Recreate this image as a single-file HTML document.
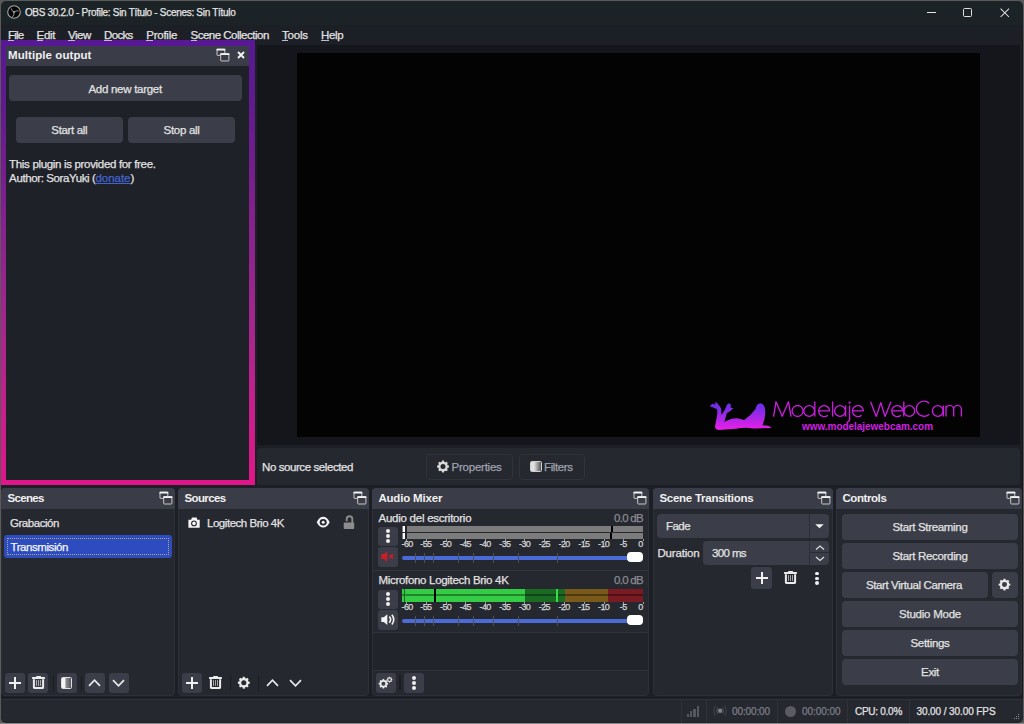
<!DOCTYPE html>
<html><head><meta charset="utf-8"><style>
html,body{margin:0;padding:0;width:1024px;height:724px;overflow:hidden;background:#2b2b2b;font-family:"Liberation Sans", sans-serif;}
body>div,#w div, #w svg{position:absolute;}
#w{position:absolute;left:0;top:0;width:1024px;height:724px;}
</style></head><body><div id="w">
<div style="left:0px;top:0px;width:1024px;height:724px;background:#5a5a5a;"></div>
<div style="left:0px;top:723px;width:1024px;height:1px;background:#8a8a8a;"></div>
<div style="left:1px;top:1px;width:1022px;height:722px;background:#1c2326;border-radius:5px 5px 5px 5px;"></div>
<div style="left:1px;top:25px;width:1022px;height:20px;background:#1d1f27;"></div>
<div style="left:1px;top:45px;width:1022px;height:655px;background:#1d1f26;"></div>
<div style="left:1022px;top:40px;width:1px;height:660px;background:#16171b;"></div>
<svg style="left:6.6px;top:5px" width="14" height="14" viewBox="-7 -7 14 14"><circle cx="0" cy="0" r="6.3" fill="#050505" stroke="#a8a8a8" stroke-width="1.1"/><path d="M0 0Q-2.2 -0.8 -2.8 -3.6M0 0Q2.2 -1.6 4.6 -1.1M0 0Q0.4 3 -1.7 5.2" stroke="#9a9a9a" stroke-width="1" fill="none"/><circle r="0.9" fill="#aaa"/></svg>
<div style="left:24.9px;top:8px;font-size:10px;line-height:10px;color:#e4e4e4;white-space:pre;-webkit-text-stroke:0.25px #e4e4e4;letter-spacing:-0.300px;">OBS 30.2.0 - Profile: Sin Título - Scenes: Sin Título</div>
<div style="left:926.5px;top:12px;width:9px;height:1.1px;background:#e4e4e4;"></div>
<div style="left:963px;top:8px;width:9px;height:9px;background:transparent;border:1.3px solid #e0e0e0;border-radius:1.5px;box-sizing:border-box;"></div>
<svg style="left:1000px;top:7.6px" width="10" height="10" viewBox="0 0 10 10"><path d="M0.6 0.6L9 9M9 0.6L0.6 9" stroke="#e4e4e4" stroke-width="1.05"/></svg>
<div style="left:257px;top:44.5px;width:763px;height:400.5px;background:#15161b;"></div>
<div style="left:297px;top:53px;width:683px;height:384px;background:#040304;"></div>
<div style="left:257px;top:448px;width:763px;height:37px;background:#262830;border-radius:4px;"></div>
<div style="left:262px;top:462px;font-size:11.5px;line-height:11.5px;color:#e2e2e2;white-space:pre;-webkit-text-stroke:0.25px #e2e2e2;letter-spacing:-0.414px;">No source selected</div>
<div style="left:426px;top:454px;width:87px;height:26px;background:transparent;border:1px solid #30333c;border-radius:4px;box-sizing:border-box;"></div>
<div style="left:518.5px;top:454px;width:66px;height:26px;background:transparent;border:1px solid #30333c;border-radius:4px;box-sizing:border-box;"></div>
<div style="left:451.6px;top:462px;font-size:11.5px;line-height:11.5px;color:#9ea2ae;white-space:pre;-webkit-text-stroke:0.25px #9ea2ae;letter-spacing:-0.242px;">Properties</div>
<svg style="left:0;top:0" width="1024" height="724"><path fill-rule="evenodd" fill="#d8d8d8" d="M447.65,465.31 L448.93,465.56 L448.93,467.44 L447.65,467.69 L447.43,468.34 L447.13,468.94 L447.85,470.03 L446.53,471.35 L445.44,470.63 L444.84,470.93 L444.19,471.15 L443.94,472.43 L442.06,472.43 L441.81,471.15 L441.16,470.93 L440.56,470.63 L439.47,471.35 L438.15,470.03 L438.87,468.94 L438.57,468.34 L438.35,467.69 L437.07,467.44 L437.07,465.56 L438.35,465.31 L438.57,464.66 L438.87,464.06 L438.15,462.97 L439.47,461.65 L440.56,462.37 L441.16,462.07 L441.81,461.85 L442.06,460.57 L443.94,460.57 L444.19,461.85 L444.84,462.07 L445.44,462.37 L446.53,461.65 L447.85,462.97 L447.13,464.06 L447.43,464.66 Z M445.52,466.5 A2.52,2.52 0 1 0 440.48,466.5 A2.52,2.52 0 1 0 445.52,466.5 Z"/></svg>
<div style="left:544px;top:462px;font-size:11.5px;line-height:11.5px;color:#9ea2ae;white-space:pre;-webkit-text-stroke:0.25px #9ea2ae;letter-spacing:-0.387px;">Filters</div>
<div style="left:530px;top:461px;width:11.5px;height:11px;border:1.2px solid #d0d0d0;box-sizing:border-box;background:linear-gradient(90deg,#e0e0e0 0 30%,#555 100%);border-radius:1.5px"></div>
<div style="left:1px;top:40.3px;width:253.5px;height:444.7px;background:linear-gradient(180deg,#581894 0%,#621a8e 15%,#a0268e 60%,#c81f8c 83%,#e0168a 100%);"></div>
<div style="left:254.6px;top:41px;width:2.4px;height:445px;background:#1c1f24;"></div>
<div style="left:5.7px;top:46px;width:243.3px;height:433.5px;background:#1f2129;"></div>
<div style="left:8px;top:30px;font-size:11.5px;line-height:11.5px;color:#e2e2e2;white-space:pre;-webkit-text-stroke:0.25px #e2e2e2;letter-spacing:-0.783px;">File</div>
<div style="left:8px;top:39.6px;width:6px;height:1.1px;background:#c0b8d0;"></div>
<div style="left:36.6px;top:30px;font-size:11.5px;line-height:11.5px;color:#e2e2e2;white-space:pre;-webkit-text-stroke:0.25px #e2e2e2;letter-spacing:-0.357px;">Edit</div>
<div style="left:36.6px;top:39.6px;width:6px;height:1.1px;background:#c0b8d0;"></div>
<div style="left:68px;top:30px;font-size:11.5px;line-height:11.5px;color:#e2e2e2;white-space:pre;-webkit-text-stroke:0.25px #e2e2e2;letter-spacing:-0.455px;">View</div>
<div style="left:68px;top:39.6px;width:7px;height:1.1px;background:#c0b8d0;"></div>
<div style="left:104px;top:30px;font-size:11.5px;line-height:11.5px;color:#e2e2e2;white-space:pre;-webkit-text-stroke:0.25px #e2e2e2;letter-spacing:-0.651px;">Docks</div>
<div style="left:104px;top:39.6px;width:8px;height:1.1px;background:#c0b8d0;"></div>
<div style="left:146.2px;top:30px;font-size:11.5px;line-height:11.5px;color:#e2e2e2;white-space:pre;-webkit-text-stroke:0.25px #e2e2e2;letter-spacing:-0.230px;">Profile</div>
<div style="left:146.2px;top:39.6px;width:7px;height:1.1px;background:#c0b8d0;"></div>
<div style="left:190.5px;top:30px;font-size:11.5px;line-height:11.5px;color:#e2e2e2;white-space:pre;-webkit-text-stroke:0.25px #e2e2e2;letter-spacing:-0.501px;">Scene Collection</div>
<div style="left:190.5px;top:39.6px;width:6px;height:1.1px;background:#c0b8d0;"></div>
<div style="left:282px;top:30px;font-size:11.5px;line-height:11.5px;color:#e2e2e2;white-space:pre;-webkit-text-stroke:0.25px #e2e2e2;letter-spacing:-0.212px;">Tools</div>
<div style="left:282px;top:39.6px;width:6px;height:1.1px;background:#c0b8d0;"></div>
<div style="left:321px;top:30px;font-size:11.5px;line-height:11.5px;color:#e2e2e2;white-space:pre;-webkit-text-stroke:0.25px #e2e2e2;letter-spacing:-0.314px;">Help</div>
<div style="left:321px;top:39.6px;width:8px;height:1.1px;background:#c0b8d0;"></div>
<div style="left:6px;top:46px;width:243px;height:20px;background:#3a3d47;"></div>
<div style="left:8px;top:50px;font-size:11.5px;line-height:11.5px;color:#f0f0f0;white-space:pre;font-weight:bold;letter-spacing:0.073px;">Multiple output</div>
<div style="left:9px;top:75px;width:233px;height:26px;background:#3b3e48;border-radius:4px;"></div>
<div style="left:88.4px;top:84px;font-size:11.5px;line-height:11.5px;color:#e2e2e2;white-space:pre;-webkit-text-stroke:0.25px #e2e2e2;letter-spacing:-0.276px;">Add new target</div>
<div style="left:16px;top:117px;width:107px;height:26px;background:#3b3e48;border-radius:4px;"></div>
<div style="left:128px;top:117px;width:107px;height:26px;background:#3b3e48;border-radius:4px;"></div>
<div style="left:51.3px;top:125px;font-size:11.5px;line-height:11.5px;color:#e2e2e2;white-space:pre;-webkit-text-stroke:0.25px #e2e2e2;letter-spacing:-0.333px;">Start all</div>
<div style="left:163.6px;top:125px;font-size:11.5px;line-height:11.5px;color:#e2e2e2;white-space:pre;-webkit-text-stroke:0.25px #e2e2e2;letter-spacing:-0.295px;">Stop all</div>
<div style="left:9.1px;top:159px;font-size:11.5px;line-height:11.5px;color:#e2e2e2;white-space:pre;-webkit-text-stroke:0.25px #e2e2e2;letter-spacing:-0.326px;">This plugin is provided for free.</div>
<div style="left:9.1px;top:173px;font-size:11.5px;line-height:11.5px;color:#e2e2e2;white-space:pre;-webkit-text-stroke:0.25px #e2e2e2;letter-spacing:-0.385px;">Author: SoraYuki (</div>
<div style="left:95.5px;top:173px;font-size:11.5px;line-height:11.5px;color:#4264d0;white-space:pre;-webkit-text-stroke:0.25px #4264d0;letter-spacing:-0.031px;text-decoration:underline;">donate</div>
<div style="left:130.4px;top:173px;font-size:11.5px;line-height:11.5px;color:#e2e2e2;white-space:pre;-webkit-text-stroke:0.25px #e2e2e2;">)</div>
<svg style="left:216px;top:48px" width="14" height="14" viewBox="0 0 14 14"><rect x="1" y="1.2" width="7.8" height="6.2" rx="0.4" fill="none" stroke="#c8c8c8" stroke-width="1"/><rect x="0.5" y="0.7" width="8.8" height="1.9" rx="0.3" fill="#f4f4f4"/><rect x="4.7" y="5.7" width="8.2" height="7.3" rx="0.6" fill="#3a3d47" stroke="#c8c8c8" stroke-width="1"/><rect x="4.2" y="5.2" width="9.2" height="1.9" rx="0.3" fill="#f4f4f4"/></svg>
<svg style="left:236.5px;top:51.3px" width="8" height="8" viewBox="0 0 8 8"><path d="M1 1L7 7M7 1L1 7" stroke="#f4f4f4" stroke-width="1.9"/></svg>
<svg style="left:0;top:0" width="1024" height="724" viewBox="0 0 1024 724">
<defs><linearGradient id="sg" x1="0" y1="0" x2="0" y2="1"><stop offset="0" stop-color="#5e30e8"/><stop offset="0.5" stop-color="#a028e8"/><stop offset="1" stop-color="#ec1ee8"/></linearGradient></defs>
<g transform="translate(705,398) scale(0.06835)">
<path fill="url(#sg)" d="M70 120 L105 85 L150 95 L150 60 L175 70 L215 120 L235 150 L242 250 L295 165 L320 100 L345 75 L380 95 L375 140 L415 150 L365 195 L320 220 L283 350 Q380 290 470 295 Q540 310 575 322 Q680 240 740 160 Q750 80 810 75 Q870 85 880 170 Q890 290 840 400 L930 405 L975 440 L700 448 Q600 425 450 450 L200 468 Q140 462 148 410 L180 235 L178 165 L130 142 Z"/>
</g>
<g stroke="#c81edc" stroke-width="1.35" fill="none" stroke-linejoin="round">
<path d="M773.6,416.6 L776,401.8 L782.2,416.2 L788.5,401.8 L791,416.6"/>
<circle cx="797.6" cy="411" r="5.5"/>
<circle cx="809.2" cy="411" r="5.4"/><path d="M814.8,401.4V416.6"/>
<path d="M818.8,410.8H829.6A5.5,5.5 0 1 0 827.8,415.2"/>
<path d="M832.6,401.4V416.6"/>
<circle cx="840" cy="411" r="5.4"/><path d="M845.6,405.5V416.6"/>
<path d="M849.6,405.5V419.5Q849.6,421.6 847.3,421.6"/><circle cx="849.6" cy="402.6" r="0.5"/>
<path d="M852.6,410.8H863.4A5.5,5.5 0 1 0 861.6,415.2"/>
<path d="M870.6,401.8 L876.3,416.4 L880.8,402.6 L885,416.4 L891,401.8"/>
<path d="M891.9,410.8H902.7A5.5,5.5 0 1 0 900.9,415.2"/>
<path d="M903.8,401.4V416.6"/><circle cx="909.3" cy="411" r="5.4"/>
<path d="M929.2,403.2A7.6,7.6 0 1 0 929.2,414.2"/>
<circle cx="937.8" cy="411" r="5.4"/><path d="M943.3,405.5V416.6"/>
<path d="M946,405.5V416.6M946,409.8A3.8,4.3 0 0 1 953.7,409.8V416.6M953.7,409.8A3.8,4.3 0 0 1 961.4,409.8V416.6"/>
</g>
<text x="802" y="429.7" font-family="Liberation Sans" font-size="10.2" font-weight="bold" fill="#d020e0" textLength="131" lengthAdjust="spacingAndGlyphs">www.modelajewebcam.com</text>
</svg>
<div style="left:1px;top:488px;width:174px;height:208px;background:#262830;border-radius:4px;border:1px solid #2e3039;box-sizing:border-box;"></div>
<div style="left:1px;top:488px;width:174px;height:21px;background:#3a3d47;border-radius:4px 4px 0 0;"></div>
<div style="left:7.4px;top:493px;font-size:11.5px;line-height:11.5px;color:#f0f0f0;white-space:pre;font-weight:bold;letter-spacing:-0.647px;">Scenes</div>
<svg style="left:159px;top:491px" width="14" height="14" viewBox="0 0 14 14"><rect x="1" y="1.2" width="7.8" height="6.2" rx="0.4" fill="none" stroke="#c8c8c8" stroke-width="1"/><rect x="0.5" y="0.7" width="8.8" height="1.9" rx="0.3" fill="#f4f4f4"/><rect x="4.7" y="5.7" width="8.2" height="7.3" rx="0.6" fill="#3a3d47" stroke="#c8c8c8" stroke-width="1"/><rect x="4.2" y="5.2" width="9.2" height="1.9" rx="0.3" fill="#f4f4f4"/></svg>
<div style="left:178px;top:488px;width:191px;height:208px;background:#262830;border-radius:4px;border:1px solid #2e3039;box-sizing:border-box;"></div>
<div style="left:178px;top:488px;width:191px;height:21px;background:#3a3d47;border-radius:4px 4px 0 0;"></div>
<div style="left:184.4px;top:493px;font-size:11.5px;line-height:11.5px;color:#f0f0f0;white-space:pre;font-weight:bold;letter-spacing:-0.599px;">Sources</div>
<svg style="left:353px;top:491px" width="14" height="14" viewBox="0 0 14 14"><rect x="1" y="1.2" width="7.8" height="6.2" rx="0.4" fill="none" stroke="#c8c8c8" stroke-width="1"/><rect x="0.5" y="0.7" width="8.8" height="1.9" rx="0.3" fill="#f4f4f4"/><rect x="4.7" y="5.7" width="8.2" height="7.3" rx="0.6" fill="#3a3d47" stroke="#c8c8c8" stroke-width="1"/><rect x="4.2" y="5.2" width="9.2" height="1.9" rx="0.3" fill="#f4f4f4"/></svg>
<div style="left:372px;top:488px;width:277px;height:208px;background:#262830;border-radius:4px;border:1px solid #2e3039;box-sizing:border-box;"></div>
<div style="left:372px;top:488px;width:277px;height:21px;background:#3a3d47;border-radius:4px 4px 0 0;"></div>
<div style="left:378.4px;top:493px;font-size:11.5px;line-height:11.5px;color:#f0f0f0;white-space:pre;font-weight:bold;letter-spacing:-0.183px;">Audio Mixer</div>
<svg style="left:633px;top:491px" width="14" height="14" viewBox="0 0 14 14"><rect x="1" y="1.2" width="7.8" height="6.2" rx="0.4" fill="none" stroke="#c8c8c8" stroke-width="1"/><rect x="0.5" y="0.7" width="8.8" height="1.9" rx="0.3" fill="#f4f4f4"/><rect x="4.7" y="5.7" width="8.2" height="7.3" rx="0.6" fill="#3a3d47" stroke="#c8c8c8" stroke-width="1"/><rect x="4.2" y="5.2" width="9.2" height="1.9" rx="0.3" fill="#f4f4f4"/></svg>
<div style="left:653px;top:488px;width:180px;height:208px;background:#262830;border-radius:4px;border:1px solid #2e3039;box-sizing:border-box;"></div>
<div style="left:653px;top:488px;width:180px;height:21px;background:#3a3d47;border-radius:4px 4px 0 0;"></div>
<div style="left:659.4px;top:493px;font-size:11.5px;line-height:11.5px;color:#f0f0f0;white-space:pre;font-weight:bold;letter-spacing:-0.261px;">Scene Transitions</div>
<svg style="left:817px;top:491px" width="14" height="14" viewBox="0 0 14 14"><rect x="1" y="1.2" width="7.8" height="6.2" rx="0.4" fill="none" stroke="#c8c8c8" stroke-width="1"/><rect x="0.5" y="0.7" width="8.8" height="1.9" rx="0.3" fill="#f4f4f4"/><rect x="4.7" y="5.7" width="8.2" height="7.3" rx="0.6" fill="#3a3d47" stroke="#c8c8c8" stroke-width="1"/><rect x="4.2" y="5.2" width="9.2" height="1.9" rx="0.3" fill="#f4f4f4"/></svg>
<div style="left:836px;top:488px;width:186px;height:208px;background:#262830;border-radius:4px;border:1px solid #2e3039;box-sizing:border-box;"></div>
<div style="left:836px;top:488px;width:186px;height:21px;background:#3a3d47;border-radius:4px 4px 0 0;"></div>
<div style="left:842.4px;top:493px;font-size:11.5px;line-height:11.5px;color:#f0f0f0;white-space:pre;font-weight:bold;letter-spacing:-0.410px;">Controls</div>
<svg style="left:1006px;top:491px" width="14" height="14" viewBox="0 0 14 14"><rect x="1" y="1.2" width="7.8" height="6.2" rx="0.4" fill="none" stroke="#c8c8c8" stroke-width="1"/><rect x="0.5" y="0.7" width="8.8" height="1.9" rx="0.3" fill="#f4f4f4"/><rect x="4.7" y="5.7" width="8.2" height="7.3" rx="0.6" fill="#3a3d47" stroke="#c8c8c8" stroke-width="1"/><rect x="4.2" y="5.2" width="9.2" height="1.9" rx="0.3" fill="#f4f4f4"/></svg>
<div style="left:10px;top:518px;font-size:11.5px;line-height:11.5px;color:#e2e2e2;white-space:pre;-webkit-text-stroke:0.25px #e2e2e2;letter-spacing:-0.451px;">Grabación</div>
<div style="left:4px;top:535px;width:168px;height:23px;background:#2c4cc0;border-radius:3px;"></div>
<div style="left:7px;top:538px;width:162px;height:17px;background:transparent;border:1px dotted #b8a878;box-sizing:border-box;"></div>
<div style="left:10.5px;top:542px;font-size:11.5px;line-height:11.5px;color:#f4f4f4;white-space:pre;-webkit-text-stroke:0.25px #f4f4f4;letter-spacing:-0.428px;">Transmisión</div>
<div style="left:5px;top:673px;width:20px;height:20px;background:#3b3e48;border-radius:3px;"></div>
<div style="left:28px;top:673px;width:20px;height:20px;background:#3b3e48;border-radius:3px;"></div>
<div style="left:57px;top:673px;width:20px;height:20px;background:#3b3e48;border-radius:3px;"></div>
<div style="left:85px;top:673px;width:20px;height:20px;background:#3b3e48;border-radius:3px;"></div>
<div style="left:109px;top:673px;width:20px;height:20px;background:#3b3e48;border-radius:3px;"></div>
<div style="left:9px;top:681.5px;width:12px;height:2px;background:#f0f0f0;"></div>
<div style="left:14px;top:676.5px;width:2px;height:12px;background:#f0f0f0;"></div>
<svg style="left:31.9px;top:675.9px" width="13" height="14" viewBox="0 0 13 14"><rect x="4.1" y="0" width="5" height="1.6" rx="0.7" fill="#ececec"/><rect x="0" y="1.1" width="13" height="1.8" rx="0.6" fill="#ececec"/><path d="M1.9 3.3V11.4Q1.9 12.1 2.9 12.1H10.1Q11.1 12.1 11.1 11.4V3.3" stroke="#ececec" stroke-width="2" fill="none"/><path d="M4.5 4.1V9.9M6.5 4.1V9.9M8.5 4.1V9.9" stroke="#b4b4b8" stroke-width="0.9"/></svg>
<div style="left:52.5px;top:675.5px;width:1px;height:15px;background:#1b1c22;"></div>
<div style="left:80.5px;top:675.5px;width:1px;height:15px;background:#1b1c22;"></div>
<div style="left:60.8px;top:677px;width:11.2px;height:11.8px;border:1.2px solid #e0e0e0;box-sizing:border-box;background:linear-gradient(90deg,#f4f4f4 0 30%,#8a8a90 45%,#55575e 100%);border-radius:1.5px"></div>
<svg style="left:88.3px;top:678.5px" width="13" height="8" viewBox="0 0 13 8"><path d="M1 6.8L6.5 1.2L12 6.8" stroke="#e8e8e8" stroke-width="1.7" fill="none"/></svg>
<svg style="left:111.9px;top:678.5px" width="13" height="8" viewBox="0 0 13 8"><path d="M1 1.2L6.5 6.8L12 1.2" stroke="#e8e8e8" stroke-width="1.7" fill="none"/></svg>
<svg style="left:187.5px;top:516.5px" width="12" height="11" viewBox="0 0 12 11"><path d="M0.4 2.7H3.2L3.9 0.5H8.6L9.3 2.7H11.7V10.7H0.4Z" fill="#f4f4f4"/><circle cx="6" cy="6.4" r="2.9" fill="#262830"/><circle cx="6" cy="6.4" r="1.8" fill="#f4f4f4"/></svg>
<div style="left:207px;top:518px;font-size:11.5px;line-height:11.5px;color:#e2e2e2;white-space:pre;-webkit-text-stroke:0.25px #e2e2e2;letter-spacing:-0.462px;">Logitech Brio 4K</div>
<svg style="left:0;top:0" width="1024" height="724"><path d="M316.7,522.2 Q319.5,516.8 323.2,516.8 Q326.9,516.8 329.7,522.2 Q326.9,527.6 323.2,527.6 Q319.5,527.6 316.7,522.2Z" fill="#f4f4f4"/><ellipse cx="323.2" cy="522.2" rx="3.5" ry="3.3" fill="#262830"/><circle cx="323.2" cy="522.2" r="1.5" fill="#f4f4f4"/><rect x="343.7" y="522.6" width="10.5" height="6.3" rx="0.9" fill="#8c8c8c"/><path d="M346.7,521.2V519A2.8,2.8 0 0 1 352.3,519V523" stroke="#8c8c8c" stroke-width="1.9" fill="none"/></svg>
<div style="left:182px;top:673px;width:20px;height:20px;background:#3b3e48;border-radius:3px;"></div>
<div style="left:185.9px;top:681.6px;width:12px;height:2px;background:#f0f0f0;"></div>
<div style="left:190.9px;top:676.6px;width:2px;height:12px;background:#f0f0f0;"></div>
<svg style="left:209.4px;top:675.9px" width="13" height="14" viewBox="0 0 13 14"><rect x="4.1" y="0" width="5" height="1.6" rx="0.7" fill="#ececec"/><rect x="0" y="1.1" width="13" height="1.8" rx="0.6" fill="#ececec"/><path d="M1.9 3.3V11.4Q1.9 12.1 2.9 12.1H10.1Q11.1 12.1 11.1 11.4V3.3" stroke="#ececec" stroke-width="2" fill="none"/><path d="M4.5 4.1V9.9M6.5 4.1V9.9M8.5 4.1V9.9" stroke="#b4b4b8" stroke-width="0.9"/></svg>
<div style="left:229.5px;top:675.5px;width:1px;height:15px;background:#1b1c22;"></div>
<div style="left:258px;top:675.5px;width:1px;height:15px;background:#1b1c22;"></div>
<svg style="left:0;top:0" width="1024" height="724"><path fill-rule="evenodd" fill="#e8e8e8" d="M248.45,681.51 L249.73,681.76 L249.73,683.64 L248.45,683.89 L248.23,684.54 L247.93,685.14 L248.65,686.23 L247.33,687.55 L246.24,686.83 L245.64,687.13 L244.99,687.35 L244.74,688.63 L242.86,688.63 L242.61,687.35 L241.96,687.13 L241.36,686.83 L240.27,687.55 L238.95,686.23 L239.67,685.14 L239.37,684.54 L239.15,683.89 L237.87,683.64 L237.87,681.76 L239.15,681.51 L239.37,680.86 L239.67,680.26 L238.95,679.17 L240.27,677.85 L241.36,678.57 L241.96,678.27 L242.61,678.05 L242.86,676.77 L244.74,676.77 L244.99,678.05 L245.64,678.27 L246.24,678.57 L247.33,677.85 L248.65,679.17 L247.93,680.26 L248.23,680.86 Z M246.32,682.7 A2.52,2.52 0 1 0 241.28,682.7 A2.52,2.52 0 1 0 246.32,682.7 Z"/></svg>
<svg style="left:265.5px;top:678.5px" width="13" height="8" viewBox="0 0 13 8"><path d="M1 6.8L6.5 1.2L12 6.8" stroke="#e8e8e8" stroke-width="1.7" fill="none"/></svg>
<svg style="left:289.2px;top:678.5px" width="13" height="8" viewBox="0 0 13 8"><path d="M1 1.2L6.5 6.8L12 1.2" stroke="#e8e8e8" stroke-width="1.7" fill="none"/></svg>
<div style="left:373px;top:509px;width:275px;height:124px;background:#262830;"></div>
<div style="left:373px;top:570px;width:275px;height:1px;background:#30323b;"></div>
<div style="left:373px;top:632px;width:275px;height:1px;background:#30323b;"></div>
<div style="left:373px;top:633px;width:275px;height:37px;background:#22242b;"></div>
<div style="left:373px;top:670px;width:275px;height:1px;background:#30323b;"></div>
<div style="left:378.5px;top:513px;font-size:11.5px;line-height:11.5px;color:#e2e2e2;white-space:pre;-webkit-text-stroke:0.25px #e2e2e2;letter-spacing:-0.251px;">Audio del escritorio</div>
<div style="left:614px;top:513px;font-size:11.5px;line-height:11.5px;color:#8a8c92;white-space:pre;-webkit-text-stroke:0.25px #8a8c92;letter-spacing:-0.708px;">0.0 dB</div>
<div style="left:378px;top:527px;width:20px;height:19px;background:#3b3e48;border-radius:3px;"></div>
<div style="left:386.2px;top:529.2px;width:3.6px;height:3.6px;border-radius:2px;background:#f0f0f0"></div>
<div style="left:386.2px;top:534.2px;width:3.6px;height:3.6px;border-radius:2px;background:#f0f0f0"></div>
<div style="left:386.2px;top:539.2px;width:3.6px;height:3.6px;border-radius:2px;background:#f0f0f0"></div>
<div style="left:378px;top:547.3px;width:20px;height:19.5px;background:#3b3e48;border-radius:3px;"></div>
<div style="left:402px;top:526px;width:241px;height:6px;background:#7c7c7c;"></div>
<div style="left:402px;top:533px;width:241px;height:6px;background:#7c7c7c;"></div>
<div style="left:402.6px;top:526px;width:2.5px;height:6px;background:#ffffff;"></div>
<div style="left:402.6px;top:533px;width:2.5px;height:6px;background:#ffffff;"></div>
<div style="left:405px;top:526px;width:1.5px;height:13px;background:#22242b;"></div>
<div style="left:611px;top:526px;width:2px;height:6px;background:#000;"></div>
<div style="left:610px;top:533px;width:2px;height:6px;background:#000;"></div>
<div style="left:406px;top:538.6px;width:1px;height:2.6px;background:#a0a0a0;"></div>
<div style="left:401.5px;top:540px;font-size:9px;line-height:9px;color:#d8d8d8;white-space:pre;-webkit-text-stroke:0.25px #d8d8d8;letter-spacing:-0.672px;letter-spacing:-0.6px;">-60</div>
<div style="left:426px;top:538.6px;width:1px;height:2.6px;background:#a0a0a0;"></div>
<div style="left:420.25px;top:540px;font-size:9px;line-height:9px;color:#d8d8d8;white-space:pre;-webkit-text-stroke:0.25px #d8d8d8;letter-spacing:-0.672px;letter-spacing:-0.6px;">-55</div>
<div style="left:446px;top:538.6px;width:1px;height:2.6px;background:#a0a0a0;"></div>
<div style="left:440.0px;top:540px;font-size:9px;line-height:9px;color:#d8d8d8;white-space:pre;-webkit-text-stroke:0.25px #d8d8d8;letter-spacing:-0.672px;letter-spacing:-0.6px;">-50</div>
<div style="left:465px;top:538.6px;width:1px;height:2.6px;background:#a0a0a0;"></div>
<div style="left:459.75px;top:540px;font-size:9px;line-height:9px;color:#d8d8d8;white-space:pre;-webkit-text-stroke:0.25px #d8d8d8;letter-spacing:-0.672px;letter-spacing:-0.6px;">-45</div>
<div style="left:485px;top:538.6px;width:1px;height:2.6px;background:#a0a0a0;"></div>
<div style="left:479.5px;top:540px;font-size:9px;line-height:9px;color:#d8d8d8;white-space:pre;-webkit-text-stroke:0.25px #d8d8d8;letter-spacing:-0.672px;letter-spacing:-0.6px;">-40</div>
<div style="left:505px;top:538.6px;width:1px;height:2.6px;background:#a0a0a0;"></div>
<div style="left:499.25px;top:540px;font-size:9px;line-height:9px;color:#d8d8d8;white-space:pre;-webkit-text-stroke:0.25px #d8d8d8;letter-spacing:-0.672px;letter-spacing:-0.6px;">-35</div>
<div style="left:524px;top:538.6px;width:1px;height:2.6px;background:#a0a0a0;"></div>
<div style="left:519.0px;top:540px;font-size:9px;line-height:9px;color:#d8d8d8;white-space:pre;-webkit-text-stroke:0.25px #d8d8d8;letter-spacing:-0.672px;letter-spacing:-0.6px;">-30</div>
<div style="left:544px;top:538.6px;width:1px;height:2.6px;background:#a0a0a0;"></div>
<div style="left:538.75px;top:540px;font-size:9px;line-height:9px;color:#d8d8d8;white-space:pre;-webkit-text-stroke:0.25px #d8d8d8;letter-spacing:-0.672px;letter-spacing:-0.6px;">-25</div>
<div style="left:564px;top:538.6px;width:1px;height:2.6px;background:#a0a0a0;"></div>
<div style="left:558.5px;top:540px;font-size:9px;line-height:9px;color:#d8d8d8;white-space:pre;-webkit-text-stroke:0.25px #d8d8d8;letter-spacing:-0.672px;letter-spacing:-0.6px;">-20</div>
<div style="left:584px;top:538.6px;width:1px;height:2.6px;background:#a0a0a0;"></div>
<div style="left:578.25px;top:540px;font-size:9px;line-height:9px;color:#d8d8d8;white-space:pre;-webkit-text-stroke:0.25px #d8d8d8;letter-spacing:-0.672px;letter-spacing:-0.6px;">-15</div>
<div style="left:604px;top:538.6px;width:1px;height:2.6px;background:#a0a0a0;"></div>
<div style="left:598.0px;top:540px;font-size:9px;line-height:9px;color:#d8d8d8;white-space:pre;-webkit-text-stroke:0.25px #d8d8d8;letter-spacing:-0.672px;letter-spacing:-0.6px;">-10</div>
<div style="left:623px;top:538.6px;width:1px;height:2.6px;background:#a0a0a0;"></div>
<div style="left:619.75px;top:540px;font-size:9px;line-height:9px;color:#d8d8d8;white-space:pre;-webkit-text-stroke:0.25px #d8d8d8;letter-spacing:-0.508px;letter-spacing:-0.6px;">-5</div>
<div style="left:643px;top:538.6px;width:1px;height:2.6px;background:#a0a0a0;"></div>
<div style="left:638.3px;top:540px;font-size:9px;line-height:9px;color:#d8d8d8;white-space:pre;-webkit-text-stroke:0.25px #d8d8d8;letter-spacing:-0.6px;">0</div>
<div style="left:402px;top:556px;width:241px;height:4px;background:#4a6ad8;border-radius:2px;"></div>
<div style="left:415px;top:553px;width:1px;height:10px;background:#4c505c;"></div>
<div style="left:424px;top:553px;width:1px;height:10px;background:#4c505c;"></div>
<div style="left:433px;top:553px;width:1px;height:10px;background:#4c505c;"></div>
<div style="left:458px;top:553px;width:1px;height:10px;background:#4c505c;"></div>
<div style="left:473px;top:553px;width:1px;height:10px;background:#4c505c;"></div>
<div style="left:493px;top:553px;width:1px;height:10px;background:#4c505c;"></div>
<div style="left:518px;top:553px;width:1px;height:10px;background:#4c505c;"></div>
<div style="left:557px;top:553px;width:1px;height:10px;background:#4c505c;"></div>
<div style="left:627px;top:552px;width:16px;height:10px;background:#ffffff;border-radius:4px;"></div>
<svg style="left:381px;top:551.3px" width="14" height="12" viewBox="0 0 14 12"><path d="M0.3 3.6Q0.3 3.1 0.9 3.1H2.8L6.3 0.3V11.1L2.8 8.1H0.9Q0.3 8.1 0.3 7.5Z" fill="#c81e28"/><path d="M8.5 3.6L12.2 7.4M12.2 3.6L8.5 7.4" stroke="#c81e28" stroke-width="1.6"/></svg>
<div style="left:378.5px;top:575px;font-size:11.5px;line-height:11.5px;color:#e2e2e2;white-space:pre;-webkit-text-stroke:0.25px #e2e2e2;letter-spacing:-0.311px;">Microfono Logitech Brio 4K</div>
<div style="left:614px;top:575px;font-size:11.5px;line-height:11.5px;color:#8a8c92;white-space:pre;-webkit-text-stroke:0.25px #8a8c92;letter-spacing:-0.708px;">0.0 dB</div>
<div style="left:378px;top:590px;width:20px;height:19px;background:#3b3e48;border-radius:3px;"></div>
<div style="left:386.2px;top:592.2px;width:3.6px;height:3.6px;border-radius:2px;background:#f0f0f0"></div>
<div style="left:386.2px;top:597.2px;width:3.6px;height:3.6px;border-radius:2px;background:#f0f0f0"></div>
<div style="left:386.2px;top:602.2px;width:3.6px;height:3.6px;border-radius:2px;background:#f0f0f0"></div>
<div style="left:378px;top:610.3px;width:20px;height:19.5px;background:#3b3e48;border-radius:3px;"></div>
<div style="left:402px;top:589px;width:123px;height:13px;background:#34cc44;"></div>
<div style="left:525px;top:589px;width:40px;height:13px;background:#1a6a24;"></div>
<div style="left:565px;top:589px;width:43px;height:13px;background:#7a5a1a;"></div>
<div style="left:608px;top:589px;width:35px;height:13px;background:#7a1a22;"></div>
<div style="left:402px;top:594px;width:241px;height:2px;background:rgba(0,0,0,0.35);"></div>
<div style="left:404px;top:589px;width:1px;height:13px;background:#1a6a24;"></div>
<div style="left:434px;top:589px;width:2px;height:13px;background:#000;"></div>
<div style="left:556px;top:589px;width:2px;height:13px;background:#34dd44;"></div>
<div style="left:406px;top:601.6px;width:1px;height:2.6px;background:#a0a0a0;"></div>
<div style="left:401.5px;top:603px;font-size:9px;line-height:9px;color:#d8d8d8;white-space:pre;-webkit-text-stroke:0.25px #d8d8d8;letter-spacing:-0.672px;letter-spacing:-0.6px;">-60</div>
<div style="left:426px;top:601.6px;width:1px;height:2.6px;background:#a0a0a0;"></div>
<div style="left:420.25px;top:603px;font-size:9px;line-height:9px;color:#d8d8d8;white-space:pre;-webkit-text-stroke:0.25px #d8d8d8;letter-spacing:-0.672px;letter-spacing:-0.6px;">-55</div>
<div style="left:446px;top:601.6px;width:1px;height:2.6px;background:#a0a0a0;"></div>
<div style="left:440.0px;top:603px;font-size:9px;line-height:9px;color:#d8d8d8;white-space:pre;-webkit-text-stroke:0.25px #d8d8d8;letter-spacing:-0.672px;letter-spacing:-0.6px;">-50</div>
<div style="left:465px;top:601.6px;width:1px;height:2.6px;background:#a0a0a0;"></div>
<div style="left:459.75px;top:603px;font-size:9px;line-height:9px;color:#d8d8d8;white-space:pre;-webkit-text-stroke:0.25px #d8d8d8;letter-spacing:-0.672px;letter-spacing:-0.6px;">-45</div>
<div style="left:485px;top:601.6px;width:1px;height:2.6px;background:#a0a0a0;"></div>
<div style="left:479.5px;top:603px;font-size:9px;line-height:9px;color:#d8d8d8;white-space:pre;-webkit-text-stroke:0.25px #d8d8d8;letter-spacing:-0.672px;letter-spacing:-0.6px;">-40</div>
<div style="left:505px;top:601.6px;width:1px;height:2.6px;background:#a0a0a0;"></div>
<div style="left:499.25px;top:603px;font-size:9px;line-height:9px;color:#d8d8d8;white-space:pre;-webkit-text-stroke:0.25px #d8d8d8;letter-spacing:-0.672px;letter-spacing:-0.6px;">-35</div>
<div style="left:524px;top:601.6px;width:1px;height:2.6px;background:#a0a0a0;"></div>
<div style="left:519.0px;top:603px;font-size:9px;line-height:9px;color:#d8d8d8;white-space:pre;-webkit-text-stroke:0.25px #d8d8d8;letter-spacing:-0.672px;letter-spacing:-0.6px;">-30</div>
<div style="left:544px;top:601.6px;width:1px;height:2.6px;background:#a0a0a0;"></div>
<div style="left:538.75px;top:603px;font-size:9px;line-height:9px;color:#d8d8d8;white-space:pre;-webkit-text-stroke:0.25px #d8d8d8;letter-spacing:-0.672px;letter-spacing:-0.6px;">-25</div>
<div style="left:564px;top:601.6px;width:1px;height:2.6px;background:#a0a0a0;"></div>
<div style="left:558.5px;top:603px;font-size:9px;line-height:9px;color:#d8d8d8;white-space:pre;-webkit-text-stroke:0.25px #d8d8d8;letter-spacing:-0.672px;letter-spacing:-0.6px;">-20</div>
<div style="left:584px;top:601.6px;width:1px;height:2.6px;background:#a0a0a0;"></div>
<div style="left:578.25px;top:603px;font-size:9px;line-height:9px;color:#d8d8d8;white-space:pre;-webkit-text-stroke:0.25px #d8d8d8;letter-spacing:-0.672px;letter-spacing:-0.6px;">-15</div>
<div style="left:604px;top:601.6px;width:1px;height:2.6px;background:#a0a0a0;"></div>
<div style="left:598.0px;top:603px;font-size:9px;line-height:9px;color:#d8d8d8;white-space:pre;-webkit-text-stroke:0.25px #d8d8d8;letter-spacing:-0.672px;letter-spacing:-0.6px;">-10</div>
<div style="left:623px;top:601.6px;width:1px;height:2.6px;background:#a0a0a0;"></div>
<div style="left:619.75px;top:603px;font-size:9px;line-height:9px;color:#d8d8d8;white-space:pre;-webkit-text-stroke:0.25px #d8d8d8;letter-spacing:-0.508px;letter-spacing:-0.6px;">-5</div>
<div style="left:643px;top:601.6px;width:1px;height:2.6px;background:#a0a0a0;"></div>
<div style="left:638.3px;top:603px;font-size:9px;line-height:9px;color:#d8d8d8;white-space:pre;-webkit-text-stroke:0.25px #d8d8d8;letter-spacing:-0.6px;">0</div>
<div style="left:402px;top:619px;width:241px;height:4px;background:#4a6ad8;border-radius:2px;"></div>
<div style="left:415px;top:616px;width:1px;height:10px;background:#4c505c;"></div>
<div style="left:424px;top:616px;width:1px;height:10px;background:#4c505c;"></div>
<div style="left:433px;top:616px;width:1px;height:10px;background:#4c505c;"></div>
<div style="left:458px;top:616px;width:1px;height:10px;background:#4c505c;"></div>
<div style="left:473px;top:616px;width:1px;height:10px;background:#4c505c;"></div>
<div style="left:493px;top:616px;width:1px;height:10px;background:#4c505c;"></div>
<div style="left:518px;top:616px;width:1px;height:10px;background:#4c505c;"></div>
<div style="left:557px;top:616px;width:1px;height:10px;background:#4c505c;"></div>
<div style="left:627px;top:615px;width:16px;height:10px;background:#ffffff;border-radius:4px;"></div>
<svg style="left:381px;top:613.9px" width="15" height="12" viewBox="0 0 15 12"><path d="M0.3 3.8Q0.3 3.3 0.9 3.3H2.8L6.3 0.2V11.1L2.8 8H0.9Q0.3 8 0.3 7.4Z" fill="#f4f4f4"/><path d="M8.3 2.4Q11 5.6 8.3 8.8M10.9 0.8Q14.6 5.6 10.9 10.4" stroke="#f4f4f4" stroke-width="1.6" fill="none"/></svg>
<div style="left:376px;top:673px;width:20px;height:20px;background:#3b3e48;border-radius:3px;"></div>
<svg style="left:0;top:0" width="1024" height="724"><path fill-rule="evenodd" fill="#e8e8e8" d="M387.12,682.85 L388.14,683.05 L388.14,684.55 L387.12,684.75 L386.95,685.27 L386.71,685.75 L387.28,686.62 L386.22,687.68 L385.35,687.11 L384.87,687.35 L384.35,687.52 L384.15,688.54 L382.65,688.54 L382.45,687.52 L381.93,687.35 L381.45,687.11 L380.58,687.68 L379.52,686.62 L380.09,685.75 L379.85,685.27 L379.68,684.75 L378.66,684.55 L378.66,683.05 L379.68,682.85 L379.85,682.33 L380.09,681.85 L379.52,680.98 L380.58,679.92 L381.45,680.49 L381.93,680.25 L382.45,680.08 L382.65,679.06 L384.15,679.06 L384.35,680.08 L384.87,680.25 L385.35,680.49 L386.22,679.92 L387.28,680.98 L386.71,681.85 L386.95,682.33 Z M385.42,683.8 A2.02,2.02 0 1 0 381.38,683.8 A2.02,2.02 0 1 0 385.42,683.8 Z"/></svg>
<svg style="left:0;top:0" width="1024" height="724"><path fill-rule="evenodd" fill="#e8e8e8" d="M391.75,679.12 L392.36,679.25 L392.36,680.15 L391.75,680.28 L391.64,680.59 L391.50,680.88 L391.85,681.40 L391.20,682.05 L390.68,681.70 L390.39,681.84 L390.08,681.95 L389.95,682.56 L389.05,682.56 L388.92,681.95 L388.61,681.84 L388.32,681.70 L387.80,682.05 L387.15,681.40 L387.50,680.88 L387.36,680.59 L387.25,680.28 L386.64,680.15 L386.64,679.25 L387.25,679.12 L387.36,678.81 L387.50,678.52 L387.15,678.00 L387.80,677.35 L388.32,677.70 L388.61,677.56 L388.92,677.45 L389.05,676.84 L389.95,676.84 L390.08,677.45 L390.39,677.56 L390.68,677.70 L391.20,677.35 L391.85,678.00 L391.50,678.52 L391.64,678.81 Z M390.72,679.7 A1.22,1.22 0 1 0 388.28,679.7 A1.22,1.22 0 1 0 390.72,679.7 Z"/></svg>
<div style="left:399px;top:675px;width:1.5px;height:15px;background:#1c1d23;"></div>
<div style="left:404px;top:673px;width:20px;height:20px;background:#3b3e48;border-radius:3px;"></div>
<div style="left:412px;top:676px;width:4px;height:4px;border-radius:2px;background:#eee"></div>
<div style="left:412px;top:681px;width:4px;height:4px;border-radius:2px;background:#eee"></div>
<div style="left:412px;top:686px;width:4px;height:4px;border-radius:2px;background:#eee"></div>
<div style="left:657px;top:514px;width:172px;height:24px;background:#3b3e48;border-radius:4px;"></div>
<div style="left:809px;top:514px;width:1px;height:24px;background:#2c2e36;"></div>
<svg style="left:815px;top:523.8px" width="9" height="5" viewBox="0 0 9 5"><path d="M0.3 0.3H8.7L4.5 4.3Z" fill="#f4f4f4"/></svg>
<div style="left:666px;top:521px;font-size:11.5px;line-height:11.5px;color:#e2e2e2;white-space:pre;-webkit-text-stroke:0.25px #e2e2e2;letter-spacing:-0.555px;">Fade</div>
<div style="left:657.5px;top:548px;font-size:11.5px;line-height:11.5px;color:#e2e2e2;white-space:pre;-webkit-text-stroke:0.25px #e2e2e2;letter-spacing:-0.184px;">Duration</div>
<div style="left:703px;top:541px;width:126px;height:24px;background:#3b3e48;border-radius:4px;"></div>
<div style="left:809px;top:541px;width:1px;height:24px;background:#2c2e36;"></div>
<div style="left:810px;top:552.3px;width:19px;height:1px;background:#2a2c34;"></div>
<svg style="left:814.5px;top:545px" width="10" height="17" viewBox="0 0 10 17"><path d="M1 4.5L5 1L9 4.5M1 12L5 15.5L9 12" stroke="#ddd" stroke-width="1.2" fill="none"/></svg>
<div style="left:712px;top:548px;font-size:11.5px;line-height:11.5px;color:#e2e2e2;white-space:pre;-webkit-text-stroke:0.25px #e2e2e2;letter-spacing:-0.620px;">300 ms</div>
<div style="left:751px;top:567px;width:21px;height:22px;background:#3b3e48;border-radius:3px;"></div>
<div style="left:755.5px;top:577px;width:12px;height:2px;background:#f0f0f0;"></div>
<div style="left:760.5px;top:572px;width:2px;height:12px;background:#f0f0f0;"></div>
<svg style="left:783.5px;top:571.4px" width="13" height="14" viewBox="0 0 13 14"><rect x="4.1" y="0" width="5" height="1.6" rx="0.7" fill="#ececec"/><rect x="0" y="1.1" width="13" height="1.8" rx="0.6" fill="#ececec"/><path d="M1.9 3.3V11.4Q1.9 12.1 2.9 12.1H10.1Q11.1 12.1 11.1 11.4V3.3" stroke="#ececec" stroke-width="2" fill="none"/><path d="M4.5 4.1V9.9M6.5 4.1V9.9M8.5 4.1V9.9" stroke="#b4b4b8" stroke-width="0.9"/></svg>
<div style="left:815.2px;top:571.6px;width:3.4px;height:3.4px;border-radius:2px;background:#f0f0f0"></div>
<div style="left:815.2px;top:576.5px;width:3.4px;height:3.4px;border-radius:2px;background:#f0f0f0"></div>
<div style="left:815.2px;top:581.4px;width:3.4px;height:3.4px;border-radius:2px;background:#f0f0f0"></div>
<div style="left:842px;top:514px;width:176px;height:26px;background:#3b3e48;border-radius:4px;"></div>
<div style="left:892.5px;top:522px;font-size:11.5px;line-height:11.5px;color:#e2e2e2;white-space:pre;-webkit-text-stroke:0.25px #e2e2e2;letter-spacing:-0.327px;">Start Streaming</div>
<div style="left:842px;top:543px;width:176px;height:26px;background:#3b3e48;border-radius:4px;"></div>
<div style="left:892.5px;top:551px;font-size:11.5px;line-height:11.5px;color:#e2e2e2;white-space:pre;-webkit-text-stroke:0.25px #e2e2e2;letter-spacing:-0.327px;">Start Recording</div>
<div style="left:842px;top:601px;width:176px;height:26px;background:#3b3e48;border-radius:4px;"></div>
<div style="left:899.0px;top:609px;font-size:11.5px;line-height:11.5px;color:#e2e2e2;white-space:pre;-webkit-text-stroke:0.25px #e2e2e2;letter-spacing:-0.234px;">Studio Mode</div>
<div style="left:842px;top:630px;width:176px;height:26px;background:#3b3e48;border-radius:4px;"></div>
<div style="left:910.5px;top:638px;font-size:11.5px;line-height:11.5px;color:#e2e2e2;white-space:pre;-webkit-text-stroke:0.25px #e2e2e2;letter-spacing:-0.320px;">Settings</div>
<div style="left:842px;top:659px;width:176px;height:26px;background:#3b3e48;border-radius:4px;"></div>
<div style="left:921.0px;top:667px;font-size:11.5px;line-height:11.5px;color:#e2e2e2;white-space:pre;-webkit-text-stroke:0.25px #e2e2e2;letter-spacing:-0.293px;">Exit</div>
<div style="left:842px;top:572px;width:146px;height:26px;background:#3b3e48;border-radius:4px;"></div>
<div style="left:866px;top:580px;font-size:11.5px;line-height:11.5px;color:#e2e2e2;white-space:pre;-webkit-text-stroke:0.25px #e2e2e2;letter-spacing:-0.398px;">Start Virtual Camera</div>
<div style="left:992px;top:572px;width:26px;height:26px;background:#3b3e48;border-radius:4px;"></div>
<svg style="left:0;top:0" width="1024" height="724"><path fill-rule="evenodd" fill="#e8e8e8" d="M1009.07,583.43 L1010.33,583.68 L1010.33,585.52 L1009.07,585.77 L1008.86,586.41 L1008.56,587.00 L1009.27,588.07 L1007.97,589.37 L1006.90,588.66 L1006.31,588.96 L1005.67,589.17 L1005.42,590.43 L1003.58,590.43 L1003.33,589.17 L1002.69,588.96 L1002.10,588.66 L1001.03,589.37 L999.73,588.07 L1000.44,587.00 L1000.14,586.41 L999.93,585.77 L998.67,585.52 L998.67,583.68 L999.93,583.43 L1000.14,582.79 L1000.44,582.20 L999.73,581.13 L1001.03,579.83 L1002.10,580.54 L1002.69,580.24 L1003.33,580.03 L1003.58,578.77 L1005.42,578.77 L1005.67,580.03 L1006.31,580.24 L1006.90,580.54 L1007.97,579.83 L1009.27,581.13 L1008.56,582.20 L1008.86,582.79 Z M1006.98,584.6 A2.48,2.48 0 1 0 1002.02,584.6 A2.48,2.48 0 1 0 1006.98,584.6 Z"/></svg>
<div style="left:1px;top:699px;width:1022px;height:1px;background:#30323b;"></div>
<div style="left:1px;top:700px;width:1022px;height:22px;background:#262830;border-radius:0 0 6px 6px;"></div>
<div style="left:681px;top:700px;width:1.2px;height:23px;background:#30323a;"></div>
<div style="left:706px;top:700px;width:1.2px;height:23px;background:#30323a;"></div>
<div style="left:777px;top:700px;width:1.2px;height:23px;background:#30323a;"></div>
<div style="left:847px;top:700px;width:1.2px;height:23px;background:#30323a;"></div>
<div style="left:909px;top:700px;width:1.2px;height:23px;background:#30323a;"></div>
<div style="left:687.0px;top:714px;width:2.2px;height:3px;background:#55575e;"></div>
<div style="left:690.2px;top:711px;width:2.2px;height:6px;background:#55575e;"></div>
<div style="left:693.4px;top:709px;width:2.2px;height:8px;background:#55575e;"></div>
<div style="left:696.6px;top:706px;width:2.2px;height:11px;background:#55575e;"></div>
<svg style="left:713px;top:704px" width="15" height="14" viewBox="0 0 15 14"><circle cx="7.1" cy="6.8" r="2.2" fill="#7c7e84"/><path d="M4.6 3.6Q2.9 6.8 4.6 10M9.6 3.6Q11.3 6.8 9.6 10" stroke="#4e5058" stroke-width="1.1" fill="none"/><path d="M2.4 1.4Q-0.5 6.8 2.4 12.2M11.8 1.4Q14.7 6.8 11.8 12.2" stroke="#3e4048" stroke-width="1.1" fill="none"/></svg>
<div style="left:732px;top:707px;font-size:10px;line-height:10px;color:#7c7e86;white-space:pre;-webkit-text-stroke:0.25px #7c7e86;letter-spacing:-0.117px;">00:00:00</div>
<div style="left:785px;top:705.5px;width:11px;height:11px;border-radius:6px;background:#5a5c62"></div>
<div style="left:802px;top:707px;font-size:10px;line-height:10px;color:#7c7e86;white-space:pre;-webkit-text-stroke:0.25px #7c7e86;letter-spacing:-0.055px;">00:00:00</div>
<div style="left:855px;top:707px;font-size:10px;line-height:10px;color:#e2e2e2;white-space:pre;-webkit-text-stroke:0.25px #e2e2e2;letter-spacing:-0.274px;">CPU: 0.0%</div>
<div style="left:916.5px;top:707px;font-size:10px;line-height:10px;color:#e2e2e2;white-space:pre;-webkit-text-stroke:0.25px #e2e2e2;letter-spacing:-0.096px;">30.00 / 30.00 FPS</div>
<div style="left:1018px;top:714px;width:1px;height:1px;background:#8a8a8a;"></div>
<div style="left:1016px;top:716px;width:1px;height:1px;background:#8a8a8a;"></div>
<div style="left:1018px;top:716px;width:1px;height:1px;background:#8a8a8a;"></div>
<div style="left:1014px;top:718px;width:1px;height:1px;background:#8a8a8a;"></div>
<div style="left:1016px;top:718px;width:1px;height:1px;background:#8a8a8a;"></div>
<div style="left:1018px;top:718px;width:1px;height:1px;background:#8a8a8a;"></div>
</div></body></html>
